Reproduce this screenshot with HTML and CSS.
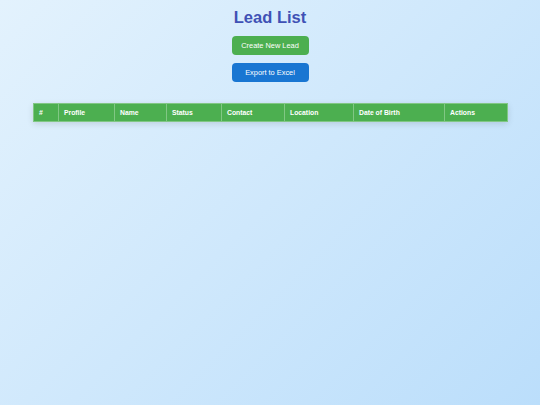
FILE: index.html
```html
<!DOCTYPE html>
<html>
<head>
<meta charset="utf-8">
<link rel="stylesheet" href="styles.css">
</head>
<body>
<div class="page">
  <h1 class="title">Lead List</h1>
  <div class="actions">
    <button class="btn btn-green">Create New Lead</button>
    <button class="btn btn-blue">Export to Excel</button>
  </div>
  <table class="leads">
    <thead>
      <tr>
        <th class="c1">#</th>
        <th class="c2">Profile</th>
        <th class="c3">Name</th>
        <th class="c4">Status</th>
        <th class="c5">Contact</th>
        <th class="c6">Location</th>
        <th class="c7">Date of Birth</th>
        <th class="c8">Actions</th>
      </tr>
    </thead>
    <tbody></tbody>
  </table>
</div>
</body>
</html>
```
FILE: styles.css
```css
html, body {
  margin: 0;
  padding: 0;
  height: 100%;
}
body {
  background: linear-gradient(135deg, #e3f2fd 0%, #bbdefb 100%);
  font-family: "Liberation Sans", Arial, sans-serif;
}
.page {
  padding: 7px 33px 0;
}
.title {
  margin: 0;
  text-align: center;
  font-size: 16.5px;
  line-height: 21px;
  font-weight: bold;
  color: #3f51b5;
}
.actions {
  display: flex;
  flex-direction: column;
  align-items: center;
  gap: 8px;
  margin-top: 8px;
}
.btn {
  width: 77px;
  height: 19px;
  padding: 0;
  border: none;
  border-radius: 4px;
  color: #fff;
  font-family: "Liberation Sans", Arial, sans-serif;
  font-size: 7.4px;
}
.btn-green { background: #4caf50; }
.btn-blue { background: #1976d2; }
.leads {
  margin-top: 21px;
  width: 474px;
  border-collapse: collapse;
  table-layout: fixed;
  box-shadow: 0 2px 6px rgba(0, 0, 0, 0.12);
}
.leads th {
  background: #4caf50;
  color: #fff;
  font-size: 6.8px;
  font-weight: bold;
  text-align: left;
  height: 18px;
  padding: 0 5px;
  border: 1px solid #81c784;
  box-sizing: border-box;
}
.c1 { width: 25px; }
.c2 { width: 56px; }
.c3 { width: 52px; }
.c4 { width: 55px; }
.c5 { width: 63px; }
.c6 { width: 69px; }
.c7 { width: 91px; }
.c8 { width: 63px; }
```
